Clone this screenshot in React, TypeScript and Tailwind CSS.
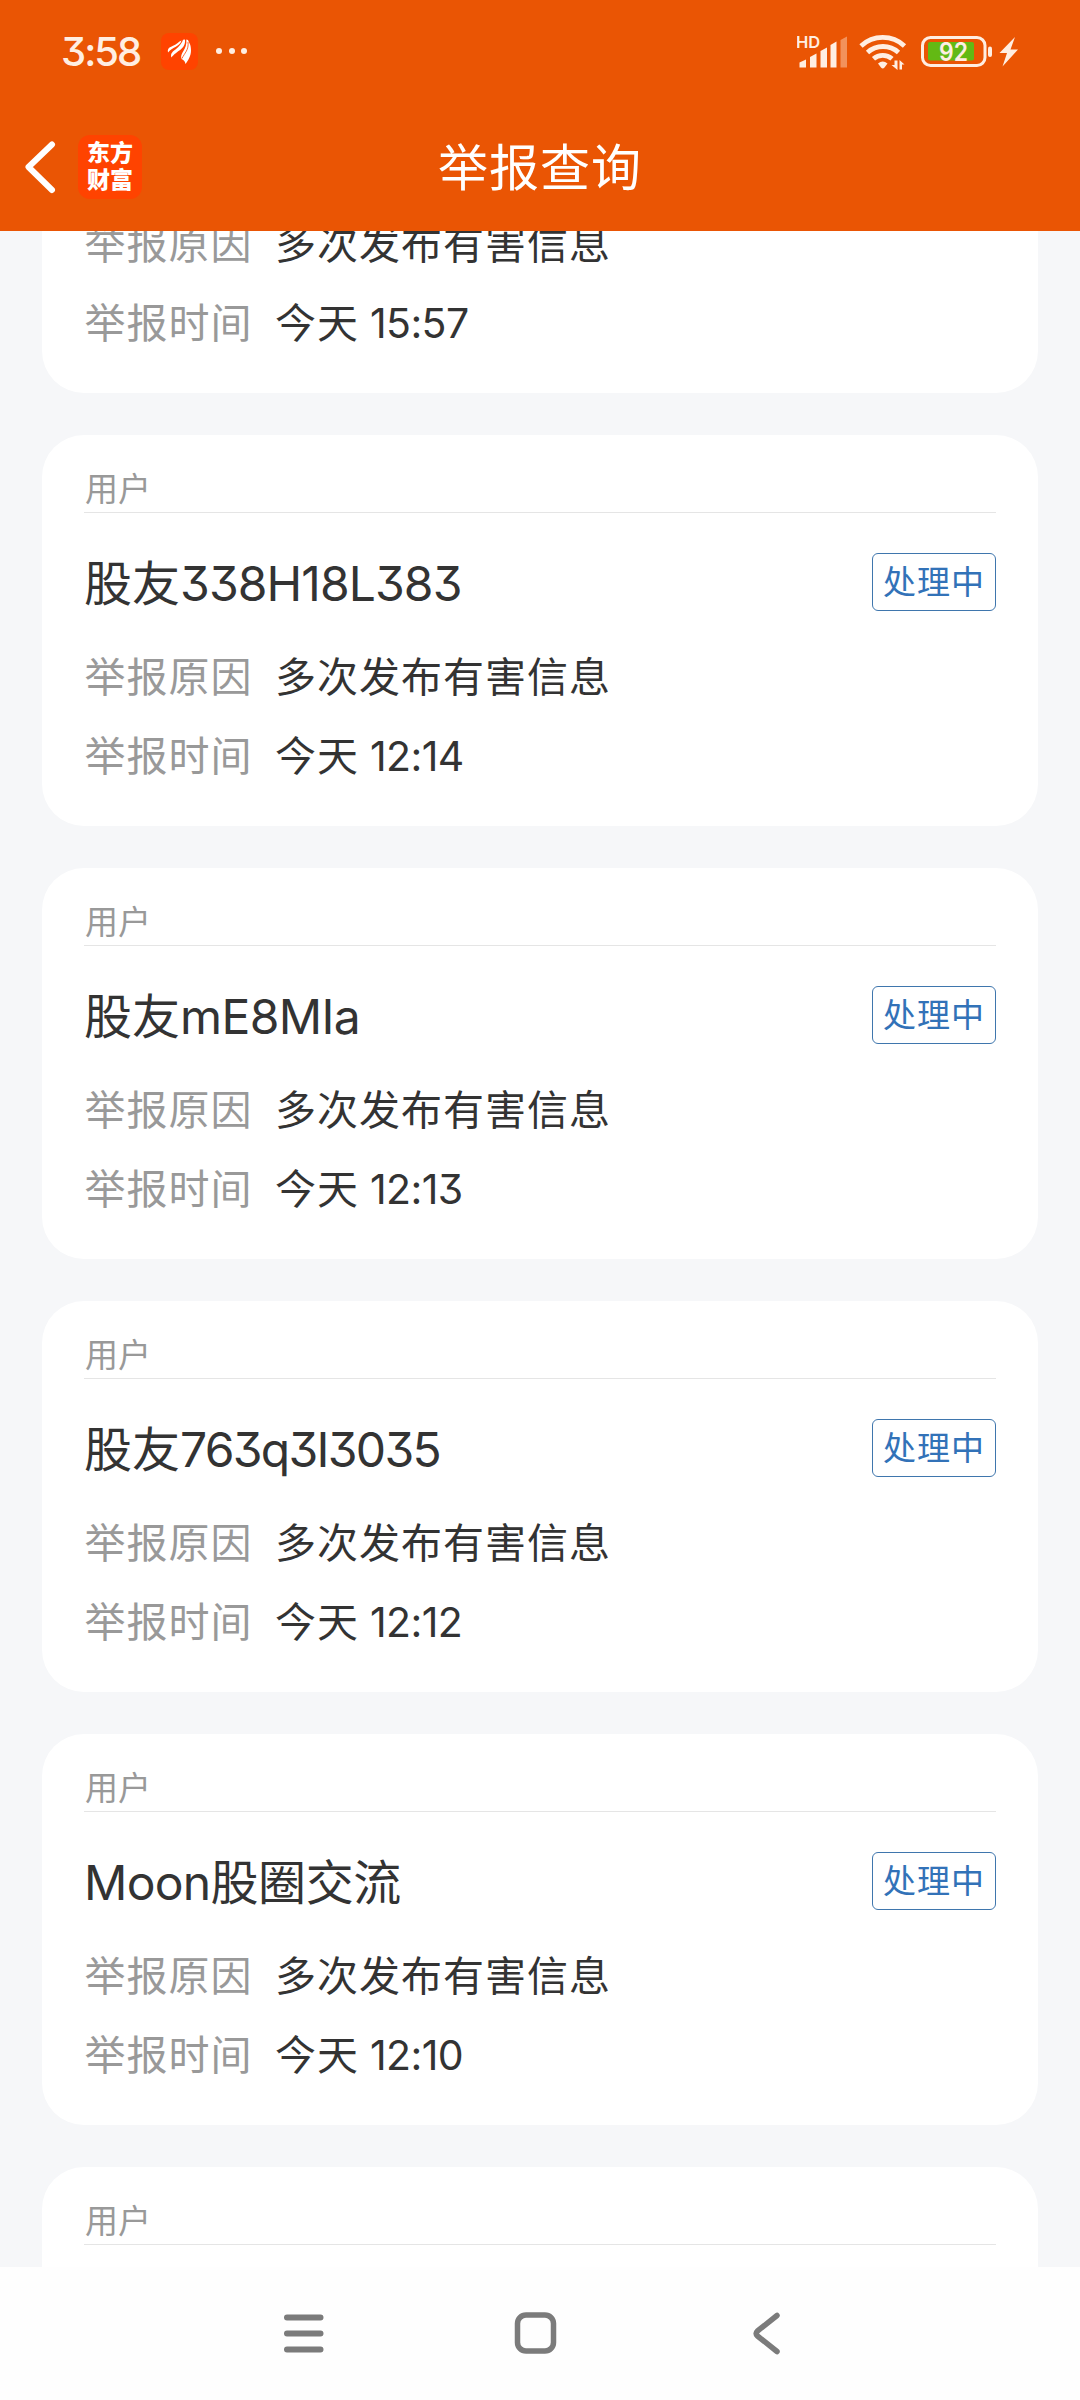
import React from 'react';

interface Report {
  name: React.ReactNode;
  time: React.ReactNode;
}

const reports: Report[] = [
  { name: <>股友<span className="tracking-[-0.9px]">338H18L383</span></>, time: '12:14' },
  { name: <>股友<span className="tracking-[-0.6px]">mE8MIa</span></>, time: '12:13' },
  { name: <>股友<span className="tracking-[-1.7px]">763q3I3035</span></>, time: '12:12' },
  { name: <><span className="tracking-[-0.7px]">Moon</span><span className="tracking-[-0.4px]">股圈交流</span></>, time: '12:10' },
];

const StatusBar: React.FC = () => (
  <div className="flex h-[102px] items-center pl-[61px] pr-[61px] text-[#ffeee2]">
    <span className="w-[84px] whitespace-nowrap pt-[2px] text-[40px] font-medium leading-none tracking-[-2px]">3:58</span>
    <div className="ml-[16px] flex h-[37px] w-[37px] items-center justify-center rounded-[8px] bg-[#ff4300]">
      <svg className="h-[37px] w-[37px]" viewBox="0 0 37 37" fill="#fff">
        <path d="M7 19.500C5.500 13 13 14 18.500 8.500L20.500 7.500C18.500 14 12 13.500 7 19.500Z" />
        <path d="M10.500 24.500C8 17.500 18 17.500 22 6.800L24 6.500C25 16.500 15.500 17.500 10.500 24.500Z" />
        <path d="M24.500 31C24 28 22.500 27 20.500 26C18.500 19.500 26.500 17 25.300 6.500L27 7C28 10 30 11 30 17.500C30 23 27 27.500 24.500 31Z" />
        <path d="M21 25.500C23.500 20 28 17 27 9" fill="none" stroke="#ff4300" strokeWidth="0.800" />
      </svg>
    </div>
    <div className="ml-[18px] flex gap-[6.500px]">
      <span className="h-[6px] w-[6px] rounded-full bg-current" />
      <span className="h-[6px] w-[6px] rounded-full bg-current" />
      <span className="h-[6px] w-[6px] rounded-full bg-current" />
    </div>
    <svg className="ml-auto h-[40px] w-[222px]" viewBox="797 31 222 40" fill="currentColor">
      <text x="796" y="47.500" fontSize="16.500" fontWeight="600">HD</text>
      <path d="M799.500 67.500V62.500L806 59.500V67.500Z" />
      <path d="M810 67.500V57L816.500 53.500V67.500Z" />
      <path d="M820.500 67.500V51L827 47.500V67.500Z" />
      <path d="M830.500 67.500V45L836.500 41.500V67.500Z" />
      <path d="M840.500 67.500V40L847 36.500V67.500Z" opacity="0.4" />
      <g fill="none" stroke="currentColor" strokeWidth="4.800">
        <path d="M861 46A32 32 0 0 1 904.500 46" />
        <path d="M867.500 52.500A23 23 0 0 1 898.500 52.500" />
        <path d="M873.500 58.800A14 14 0 0 1 892 58.800" />
      </g>
      <path d="M878 63.500Q882.800 59.500 887.500 63.500L884.500 67.500Q882.800 69.500 881 67.500Z" />
      <path d="M894.500 60.500H897.500V70L891.500 65H894.500Z" />
      <path d="M899.500 60L904.500 64.500H902V69.500H899.500Z" />
      <rect x="922.500" y="37.500" width="62.500" height="28" rx="8" fill="none" stroke="currentColor" strokeWidth="3" />
      <rect x="928" y="42" width="46" height="18.500" rx="2" fill="#63b914" />
      <rect x="988" y="46.500" width="4" height="10.500" rx="2" />
      <text x="939" y="60.500" fontSize="25" fontWeight="600" textLength="29" lengthAdjust="spacingAndGlyphs">92</text>
      <path d="M1015 37L999.500 53H1007L1002.500 66.500L1018 49.500H1010.500Z" />
    </svg>
  </div>
);

const TitleBar: React.FC = () => (
  <div className="grid h-[129px] grid-cols-3 items-center text-white">
    <div className="flex items-center">
      <svg className="ml-[24px] h-[54px] w-[34px]" viewBox="0 0 34 54" fill="none" stroke="#fff" strokeWidth="6" strokeLinecap="round" strokeLinejoin="round">
        <path d="M28 4.500L4.500 27L28 50" />
      </svg>
      <div className="ml-[20px] flex h-[64px] w-[64px] items-center justify-center rounded-[12px] bg-[#ff4300]">
        <p className="-mt-[3px] w-[46px] break-all font-['Noto_Sans_CJK_SC'] text-[23px] font-black leading-[27px]">东方财富</p>
      </div>
    </div>
    <h1 className="whitespace-nowrap pt-[2px] text-center text-[50px] leading-none tracking-[1px]">举报查询</h1>
  </div>
);

const Field: React.FC<{ label: string; children: React.ReactNode }> = ({ label, children }) => (
  <div className="flex h-[79px] shrink-0 items-center whitespace-nowrap text-[41px] leading-none">
    <span className="w-[191px] pl-[0.5px] tracking-[1px] text-[#999]">{label}</span>
    <span className="tracking-[1px] text-[#333]">{children}</span>
  </div>
);

const ReportTime: React.FC<{ time: React.ReactNode }> = ({ time }) => (
  <Field label="举报时间">
    今天<span className="ml-[11px] tracking-[-0.6px]">{time}</span>
  </Field>
);

const CardHeader: React.FC = () => (
  <div className="flex h-[78px] items-end border-b border-[#e5e5e5] pb-[6px] pl-[1px] text-[33px] leading-none text-[#999]">用户</div>
);

const ReportCard: React.FC<{ report: Report }> = ({ report }) => (
  <section className="h-[391px] shrink-0 rounded-[42px] bg-white px-[42px]">
    <CardHeader />
    <div className="flex h-[125px] items-center justify-between pt-[13px]">
      <h2 className="whitespace-nowrap pt-[3px] text-[48px] leading-none text-[#333]">{report.name}</h2>
      <span className="flex h-[58px] w-[124px] items-center justify-center whitespace-nowrap rounded-[6px] border border-[#3f76ad] text-[33px] leading-none tracking-[1px] text-[#3272b8]">处理中</span>
    </div>
    <Field label="举报原因">多次发布有害信息</Field>
    <ReportTime time={report.time} />
  </section>
);

const NavigationBar: React.FC = () => (
  <nav className="h-[133px] bg-[#fefefe]">
    <svg className="h-[133px] w-full" viewBox="0 2267 1080 133" fill="none" stroke="#7b7b7b" strokeWidth="6" strokeLinecap="round" strokeLinejoin="round">
      <path d="M287 2317.500H320.500M287 2333.500H320.500M287 2349.500H320.500" />
      <rect x="517.500" y="2315" width="36" height="36" rx="8.500" strokeWidth="5.500" />
      <path d="M777 2315.500L757.500 2331Q755 2333.500 757.500 2336L777 2351.500" strokeWidth="5.500" />
    </svg>
  </nav>
);

const App: React.FC = () => (
  <div className="flex h-[2400px] w-[1080px] flex-col overflow-hidden bg-[#f6f7f9] font-[Inter,'Noto_Sans_CJK_SC',sans-serif] [font-feature-settings:'cv09']">
    <header className="h-[231px] shrink-0 bg-[#ea5504]">
      <StatusBar />
      <TitleBar />
    </header>
    <main className="flex min-h-0 flex-1 flex-col gap-[42px] overflow-hidden px-[42px]">
      {/* first card is scrolled partly under the header */}
      <section className="flex h-[162px] shrink-0 flex-col justify-end overflow-hidden rounded-b-[42px] bg-white px-[42px] pb-[30px]">
        <Field label="举报原因">多次发布有害信息</Field>
        <ReportTime time="15:57" />
      </section>
      {reports.map((report, index) => (
        <ReportCard key={index} report={report} />
      ))}
      <section className="h-[391px] shrink-0 rounded-[42px] bg-white px-[42px]">
        <CardHeader />
      </section>
    </main>
    <NavigationBar />
  </div>
);

export default App;
